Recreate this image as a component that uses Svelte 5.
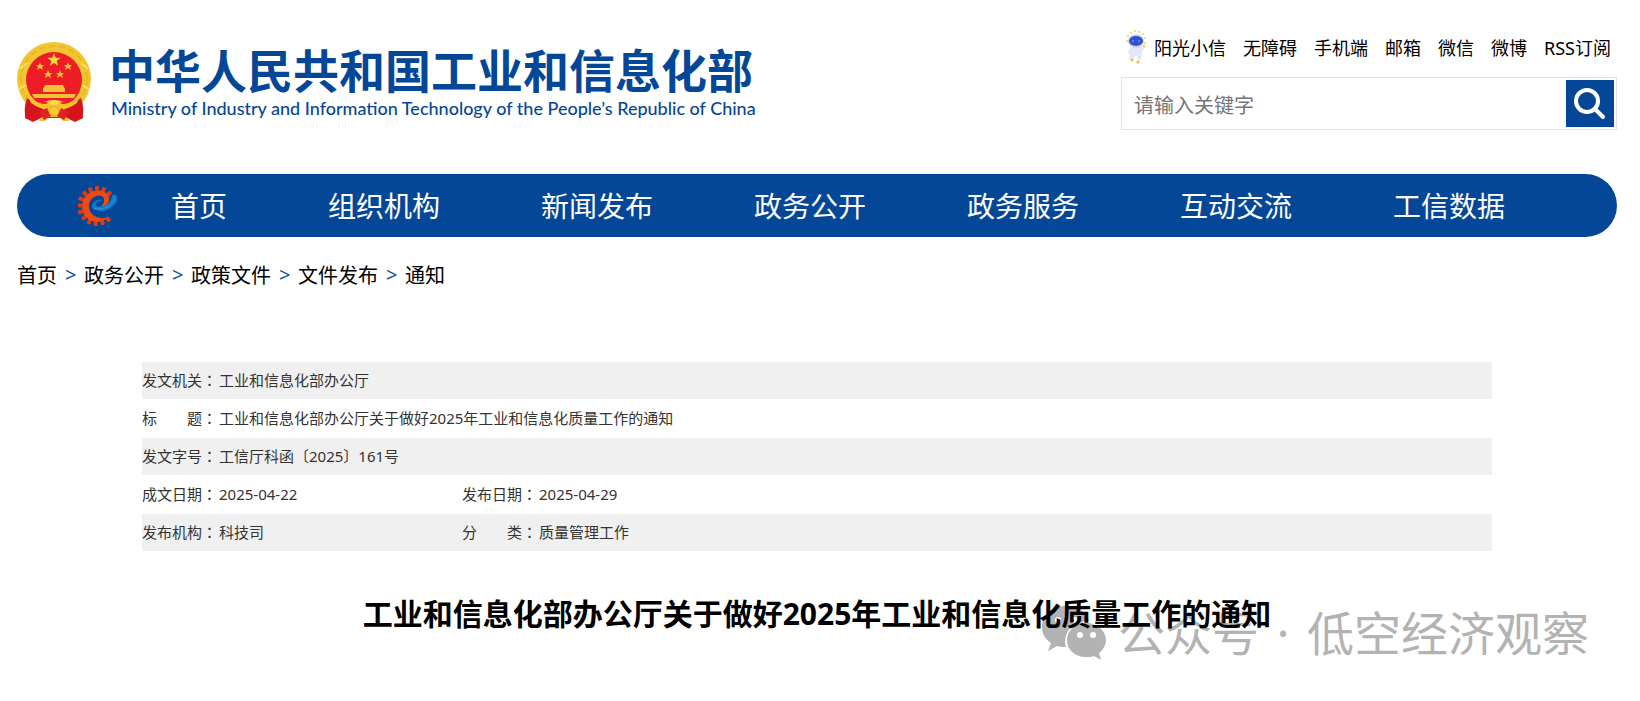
<script>
  const topLinks = ['阳光小信', '无障碍', '手机端', '邮箱', '微信', '微博', 'RSS订阅'];
  const navItems = ['首页', '组织机构', '新闻发布', '政务公开', '政务服务', '互动交流', '工信数据'];
  const crumbs = ['首页', '政务公开', '政策文件', '文件发布', '通知'];

  const docInfo = [
    [{ label: '发文机关', value: '工业和信息化部办公厅' }],
    [{ label: '标　　题', value: '工业和信息化部办公厅关于做好2025年工业和信息化质量工作的通知' }],
    [{ label: '发文字号', value: '工信厅科函〔2025〕161号' }],
    [{ label: '成文日期', value: '2025-04-22' }, { label: '发布日期', value: '2025-04-29' }],
    [{ label: '发布机构', value: '科技司' }, { label: '分　　类', value: '质量管理工作' }]
  ];

  // angles of the gear teeth, open on the right side
  const teeth = [50, 72, 94, 116, 138, 160, 182, 204, 226, 248, 270, 292, 314];

  let keyword = '';
</script>

<div class="page">
  <header class="header">
    <a class="logo" href="#home">
      <svg class="emblem" viewBox="0 0 74 80" aria-hidden="true">
        <path d="M10 57 L64 57 L66 76 L58 80 L50 76 L24 76 L16 80 L8 76 Z" fill="#d8141c" />
        <circle cx="37" cy="37" r="37" fill="#f3c530" />
        <circle cx="37" cy="37" r="33" fill="none" stroke="#e9b827" stroke-width="2" stroke-dasharray="7 3" />
        <circle cx="37" cy="38" r="28" fill="#ee1c25" />
        <path d="M3 27 L10 21 M71 27 L64 21 M2 47 L9 43 M72 47 L65 43" stroke="#fbe06a" stroke-width="2" />
        <path d="M37 11 L38.700 15.700 L43.700 15.800 L39.700 18.900 L41.100 23.700 L37 20.900 L32.900 23.700 L34.300 18.900 L30.300 15.800 L35.300 15.700 Z" fill="#fbd83c" />
        <g fill="#f7c834">
          {#each [[23, 24], [51, 24], [31, 32], [43, 32]] as [x, y]}
            <path transform="translate({x} {y})" d="M0 -4 L1 -1 L4 -1 L2 1 L3 4 L0 2 L-3 4 L-2 1 L-4 -1 L-1 -1 Z" />
          {/each}
        </g>
        <path d="M28 43 H46 L48 47 V50 H26 V47 Z M15 52 H59 L57 56 H17 Z" fill="#f3c238" />
        <path d="M10 56 Q22 64 28 65 L20 78 L15 75 L9 77 Q6 67 10 56 Z M64 56 Q52 64 46 65 L54 78 L59 75 L65 77 Q68 67 64 56 Z" fill="#d5141c" />
        <path d="M12 56 Q22 62 29 62 Q37 55 45 62 Q52 62 62 56 L60 61 Q50 68 44 67 L52 79 H46 L42 75 H32 L28 79 H22 L30 67 Q24 68 14 61 Z" fill="#f4c32c" />
        <path d="M22 70 L30 66 L34 74 L27 78 Z M52 70 L44 66 L40 74 L47 78 Z" fill="#dd2420" />
        <path d="M27 60 Q37 56 47 60 Q41 60 37 65 Q33 60 27 60 Z" fill="#f9d64c" />
        <circle cx="37" cy="69" r="5" fill="#f5c834" stroke="#e0a520" />
      </svg>
      <span class="logo-text">
        <span class="logo-cn">中华人民共和国工业和信息化部</span>
        <span class="logo-en">Ministry of Industry and Information Technology of the People’s Republic of China</span>
      </span>
    </a>

    <div class="tools">
      <nav class="top-links" aria-label="快捷入口">
        <svg class="mascot" viewBox="0 0 22 34" aria-hidden="true">
          <g fill="#f8cf3c">
            <circle cx="3" cy="6" r="1" /><circle cx="6" cy="3" r="1" /><circle cx="10" cy="1" r="1" />
            <circle cx="14" cy="2" r="1" /><circle cx="18" cy="4" r="1" /><circle cx="20" cy="8" r="1" />
            <circle cx="2" cy="11" r="1" /><circle cx="20" cy="13" r="1" />
          </g>
          <path d="M6 17 Q11 15 16 17 L20 15 L20 18 L17 21 L16 29 L13 31 L12 25 L8 29 L3 30 L5 25 L3 22 Z" fill="#dfe9f6" />
          <ellipse cx="11" cy="11" rx="8" ry="7" fill="#c7d7f2" />
          <ellipse cx="11" cy="11" rx="7" ry="5" fill="#3650c9" />
          <path d="M7 11 H9 M13 11 H15" stroke="#3f8ff2" stroke-width="2" />
          <circle cx="13" cy="32" r="1.500" fill="#f5b93a" />
          <circle cx="7" cy="30" r="1.500" fill="#f5b93a" />
          <circle cx="19" cy="16" r="1" fill="#f5b93a" />
        </svg>
        {#each topLinks as link}
          <a href="#top">{link}</a>
        {/each}
      </nav>
      <form class="search" on:submit|preventDefault>
        <input type="text" placeholder="请输入关键字" aria-label="请输入关键字" bind:value={keyword} />
        <button type="submit" aria-label="搜索">
          <svg viewBox="0 0 48 47" aria-hidden="true">
            <circle cx="21" cy="21" r="11" />
            <path d="M29 29 L37 37" />
          </svg>
        </button>
      </form>
    </div>
  </header>

  <nav class="nav" aria-label="主导航">
    <svg class="gear" viewBox="0 0 40 40" aria-hidden="true">
      <g fill="#e03a10">
        {#each teeth as angle}
          <rect x="34" y="18" width="5" height="4" rx="1" transform="rotate({angle} 19 20)" />
        {/each}
      </g>
      <path d="M31 31 C25 37 14 38 8 31 C2 24 3 13 10 8 C17 2 29 4 31 11 C32 17 27 23 18 24 C25 20 28 15 25 11 C22 8 15 10 12 15 C9 21 12 29 19 31 C24 33 28 32 31 31 Z" fill="#f04a12" />
      <path d="M14 21 C14 16 19 13 24 14 C20 15 17 17 18 20 C26 22 34 17 34 9 C39 8 40 11 39 15 C36 22 26 27 18 24 C16 24 15 23 14 21 Z" fill="#1378c8" />
      <path d="M16 22 C24 25 34 20 37 12" fill="none" stroke="#3597da" stroke-width="1" />
    </svg>
    {#each navItems as item}
      <a href="#nav">{item}</a>
    {/each}
  </nav>

  <nav class="crumbs" aria-label="当前位置">
    {#each crumbs as crumb, i}
      {#if i > 0}<span class="sep">&gt;</span>{/if}
      <a href="#crumb">{crumb}</a>
    {/each}
  </nav>

  <main class="article">
    <table class="doc-info">
      <colgroup>
        <col class="col-label" />
        <col class="col-value" />
        <col class="col-label" />
        <col />
      </colgroup>
      <tbody>
        {#each docInfo as row}
          <tr>
            {#each row as cell}
              <th scope="row">{cell.label}<span class="colon">：</span></th>
              <td colspan={row.length === 1 ? 3 : 1}>{cell.value}</td>
            {/each}
          </tr>
        {/each}
      </tbody>
    </table>

    <div class="title-area">
      <h1>工业和信息化部办公厅关于做好2025年工业和信息化质量工作的通知</h1>
      <div class="watermark">
        <svg viewBox="0 0 64 54" aria-hidden="true">
          <path d="M24 0 C10 0 0 9 0 21 C0 28 3 33 9 37 L6 45 L15 40 C18 41 21 41 24 41 C20 27 31 15 47 15 C45 6 36 0 24 0 Z" />
          <path d="M44 17 C33 17 25 25 25 34 C25 44 33 51 44 51 C47 51 50 51 52 50 L59 54 L57 47 C61 44 64 39 64 34 C64 25 55 17 44 17 Z" />
          <g fill="#fff">
            <circle cx="16" cy="14" r="3" /><circle cx="32" cy="14" r="3" />
            <circle cx="38" cy="29" r="3" /><circle cx="51" cy="29" r="3" />
          </g>
        </svg>
        <span>公众号</span>
        <span class="dot">·</span>
        <span>低空经济观察</span>
      </div>
    </div>
  </main>
</div>

<style>
  :global(body) {
    margin: 0;
    background: #fff;
  }

  .page {
    padding: 0 23px 0 17px;
    font-family: 'Noto Sans', 'Noto Sans CJK SC', sans-serif;
    color: #000;
  }

  a {
    color: inherit;
    text-decoration: none;
  }

  .header {
    display: flex;
    justify-content: space-between;
    align-items: flex-start;
    height: 174px;
  }

  .logo {
    display: flex;
    gap: 18px;
    padding-top: 42px;
    color: #054797;
  }

  .emblem {
    width: 74px;
    height: 80px;
  }

  .logo-text {
    display: flex;
    flex-direction: column;
    white-space: nowrap;
  }

  .logo-cn {
    font-size: 46px;
    font-weight: 700;
    line-height: 56px;
  }

  .logo-en {
    padding-left: 2px;
    font-family: Lato, 'Noto Sans', sans-serif;
    font-size: 18px;
    font-weight: 500;
    line-height: 20px;
  }

  .tools {
    width: 496px;
    padding-top: 30px;
  }

  .top-links {
    display: flex;
    align-items: center;
    justify-content: flex-end;
    gap: 17px;
    height: 34px;
    padding-right: 6px;
    font-size: 18px;
    white-space: nowrap;
  }

  .mascot {
    flex: none;
    width: 22px;
    height: 34px;
    margin-right: -10px;
  }

  .search {
    display: flex;
    box-sizing: border-box;
    height: 53px;
    margin-top: 13px;
    padding: 2px;
    border: 1px solid #e2e2e2;
  }

  .search input {
    flex: 1;
    min-width: 0;
    padding: 3px 10px 0;
    border: 0;
    outline: 0;
    background: none;
    font-family: inherit;
    font-size: 20px;
  }

  .search input::placeholder {
    color: #757575;
  }

  .search button {
    width: 48px;
    padding: 0;
    border: 0;
    background: #054797;
    cursor: pointer;
  }

  .search button svg {
    display: block;
    width: 100%;
    fill: none;
    stroke: #fff;
    stroke-width: 4;
    stroke-linecap: round;
  }

  .nav {
    display: flex;
    align-items: center;
    gap: 101px;
    height: 63px;
    padding-left: 61px;
    border-radius: 32px;
    background: #054797;
    color: #fff;
    font-size: 28px;
    line-height: 40px;
    white-space: nowrap;
  }

  .gear {
    flex: none;
    width: 40px;
    height: 40px;
    margin-right: -48px;
  }

  .crumbs {
    display: flex;
    align-items: center;
    gap: 8px;
    height: 74px;
    font-size: 20px;
  }

  .sep {
    width: 11px;
    color: #0b55a8;
  }

  .article {
    padding: 51px 125px 48px;
  }

  .doc-info {
    width: 100%;
    border-collapse: collapse;
    table-layout: fixed;
    color: #333;
    font-size: 15px;
  }

  .col-label {
    width: 77px;
  }

  .col-value {
    width: 243px;
  }

  .doc-info tr {
    height: 39px;
  }

  .doc-info tr:nth-child(odd) {
    height: 37px;
    background: #f0f0f0;
  }

  .doc-info th,
  .doc-info td {
    padding: 0 0 2px;
    font-weight: 400;
    line-height: 24px;
    text-align: left;
    white-space: nowrap;
  }

  .colon {
    font-family: 'Noto Sans CJK TC', sans-serif;
  }

  .title-area {
    position: relative;
    padding-top: 41px;
  }

  h1 {
    position: relative;
    z-index: 1;
    margin: 0;
    font-size: 30px;
    line-height: 44px;
    text-align: center;
  }

  .watermark {
    position: absolute;
    top: 48px;
    right: -97px;
    display: flex;
    align-items: center;
    color: #b3b3b3;
    font-size: 47px;
    line-height: 68px;
    white-space: nowrap;
  }

  .watermark svg {
    width: 64px;
    height: 54px;
    margin-right: 12px;
    fill: #b3b3b3;
  }

  .watermark .dot {
    width: 48px;
    text-align: center;
  }
</style>
